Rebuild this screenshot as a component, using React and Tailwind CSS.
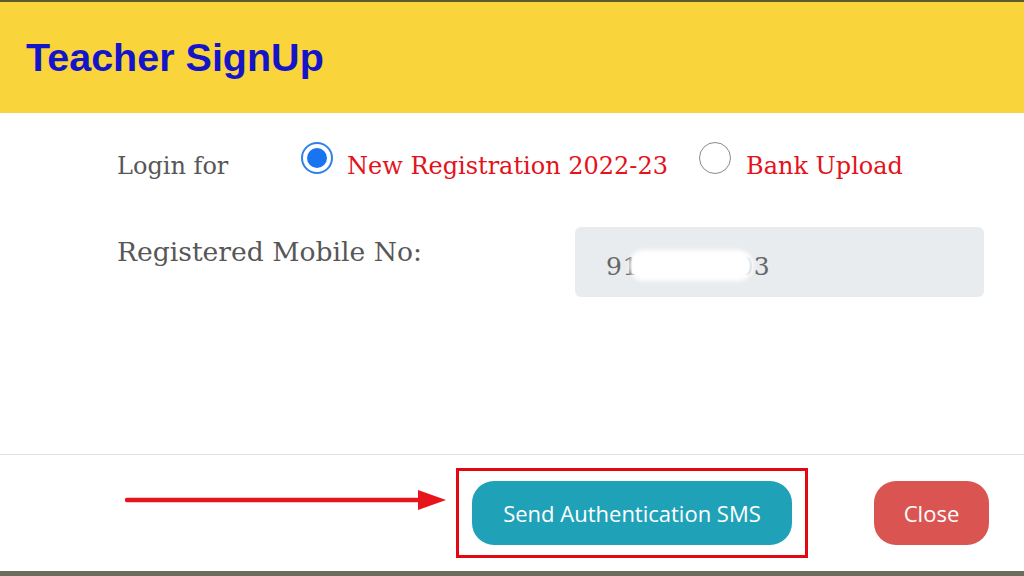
export default function App() {
  const serif = { fontFamily: '"DejaVu Serif", serif' };
  return (
    <div className="w-[1024px] h-[576px] flex flex-col bg-white overflow-hidden">
      <div className="h-[2px] bg-[#5c5a2c]" />
      <div className="h-[111px] bg-[#fad43b] flex items-center px-[26px]">
        <h1
          className="text-[39.5px] font-bold text-[#1414c8] leading-none"
          style={{ fontFamily: '"Liberation Sans", Arial, sans-serif' }}
        >
          Teacher SignUp
        </h1>
      </div>

      <div className="h-[341px] pl-[117px] pt-[29px]" style={serif}>
        <div className="flex items-start h-[32px]">
          <div className="w-[184px] mt-[8px] text-[24px] leading-[32px] text-[#575757]">Login for</div>
          <div className="w-[32px] h-[32px] rounded-full border-2 border-[#2f80ed] flex items-center justify-center shrink-0">
            <div className="w-[20px] h-[20px] rounded-full bg-[#1a73f0]" />
          </div>
          <div className="ml-[14px] mt-[8px] text-[24px] leading-[32px] text-[#e3121b] whitespace-nowrap">
            New Registration 2022-23
          </div>
          <div className="ml-[31px] w-[32px] h-[32px] rounded-full border-[1.5px] border-[#8a8a8a] bg-white shrink-0" />
          <div className="ml-[15px] mt-[8px] text-[24px] leading-[32px] text-[#e3121b] whitespace-nowrap">
            Bank Upload
          </div>
        </div>

        <div className="flex items-start mt-[53px]">
          <div className="w-[458px] mt-[8px] text-[26.6px] leading-[34px] text-[#575757] whitespace-nowrap">
            Registered Mobile No:
          </div>
          <div className="relative w-[409px] h-[70px] rounded-[6px] bg-[#e9ecef] flex items-center pl-[31px] pt-[9px] overflow-hidden">
            <span className="text-[25px] leading-[32px] text-[#666666] tracking-[0.5px]">9100000003</span>
            <div className="absolute left-[54px] top-[23px] w-[124px] h-[31px] rounded-full bg-white blur-[2px]" />
          </div>
        </div>
      </div>

      <div className="h-px bg-[#dee2e6]" />

      <div
        className="h-[116px] flex items-center pl-[125px]"
        style={{ fontFamily: '"Open Sans", sans-serif' }}
      >
        <svg width="321" height="26" viewBox="0 0 321 26" className="mb-[26px] shrink-0">
          <line x1="2" y1="13" x2="296" y2="13" stroke="#e8141c" strokeWidth="4.5" strokeLinecap="round" />
          <polygon points="293,3 321,13 293,23" fill="#e8141c" />
        </svg>
        <div className="ml-[10px] border-[3px] border-[#e30613] px-[13px] py-[10px]">
          <button className="w-[320px] h-[64px] rounded-[22px] bg-[#1fa2b8] text-white text-[22px]">
            Send Authentication SMS
          </button>
        </div>
        <button className="ml-[66px] w-[115px] h-[64px] rounded-[22px] bg-[#da5552] text-white text-[22px]">
          Close
        </button>
      </div>

      <div className="flex-1 bg-[#6a6d5d]" />
    </div>
  );
}
